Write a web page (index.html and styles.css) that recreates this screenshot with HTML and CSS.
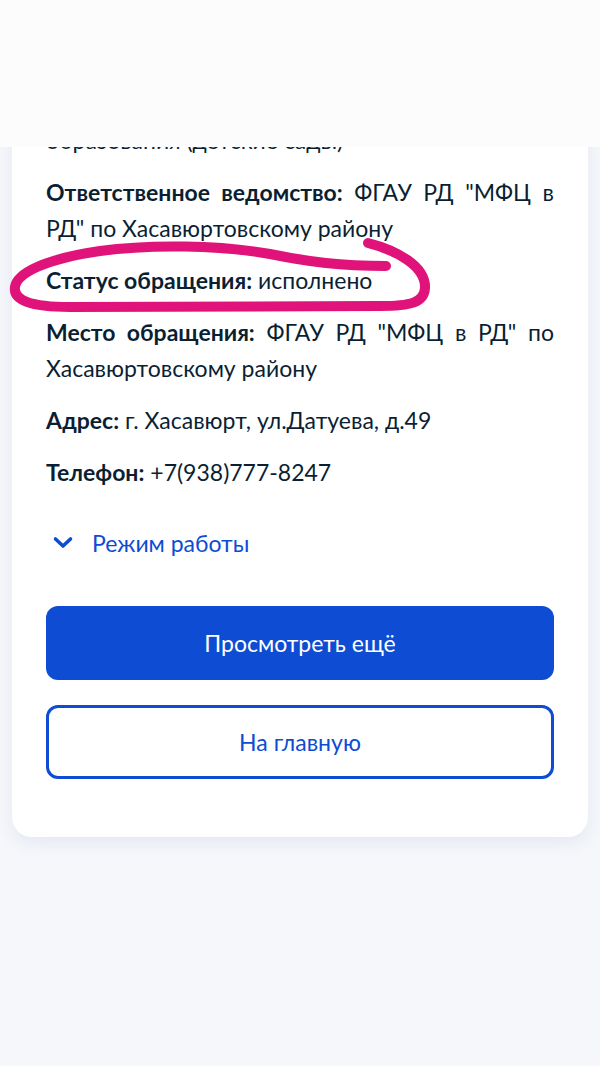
FILE: index.html
```html
<!DOCTYPE html>
<html lang="ru">
<head>
<meta charset="utf-8">
<title>Заявление</title>
<link rel="stylesheet" href="styles.css">
</head>
<body>
<div class="page">
  <div class="card">
    <p class="row">Услуга: Запись в организации дошкольного<br>образования (детские сады)</p>
    <p class="row"><b>Ответственное ведомство:</b> ФГАУ РД "МФЦ в РД" по Хасавюртовскому району</p>
    <p class="row"><b>Статус обращения:</b> исполнено</p>
    <p class="row"><b>Место обращения:</b> ФГАУ РД "МФЦ в РД" по Хасавюртовскому району</p>
    <p class="row"><b>Адрес:</b> г. Хасавюрт, ул.Датуева, д.49</p>
    <p class="row"><b>Телефон:</b> +7(938)777-8247</p>
    <div class="toggle">
      <svg class="chev" width="30" height="20" viewBox="0 0 30 20"><path d="M9.5 6 L17 13 L24.5 6" fill="none" stroke="#0d4cd3" stroke-width="3.6" stroke-linecap="round" stroke-linejoin="round"/></svg>
      <span>Режим работы</span>
    </div>
    <div class="btn primary">Просмотреть ещё</div>
    <div class="btn secondary">На главную</div>
  </div>
</div>
<div class="header"></div>
<svg class="mark" width="600" height="1066" viewBox="0 0 600 1066">
  <path d="M368 243 C 396 250, 426 266, 425 288 C 424 303, 410 306, 380 306 L 70 307 C 30 307, 13 300, 15 287 C 17 273, 45 259, 100 251 C 150 244, 220 245, 270 254 C 310 262, 340 266, 386 266" fill="none" stroke="#e0137a" stroke-width="10" stroke-linecap="round" stroke-linejoin="round"/>
</svg>
</body>
</html>
```
FILE: styles.css
```css
html, body {
  margin: 0;
  padding: 0;
}
body {
  background: #f5f7fb;
  font-family: Lato, "Noto Sans", sans-serif;
  color: #0b1f33;
  width: 600px;
  height: 1066px;
  overflow: hidden;
  position: relative;
}
.page {
  padding: 52px 12px 0;
}
.card {
  background: #ffffff;
  border-radius: 0 0 20px 20px;
  padding: 34px 34px 58px;
  box-shadow: 0 6px 18px rgba(40, 60, 120, 0.08);
}
.row {
  margin: 0 0 16px;
  font-size: 23px;
  line-height: 36px;
  text-align: justify;
}
.row b {
  font-weight: 700;
}
.toggle {
  display: flex;
  align-items: center;
  gap: 16px;
  margin-top: 35px;
  height: 36px;
  color: #0d4cd3;
  font-size: 23px;
  line-height: 36px;
}
.chev {
  display: block;
  margin-left: 0;
}
.btn {
  display: flex;
  align-items: center;
  justify-content: center;
  height: 74px;
  border-radius: 12px;
  font-size: 23px;
  box-sizing: border-box;
}
.primary {
  margin-top: 45px;
  background: #0d4cd3;
  color: #ffffff;
}
.secondary {
  margin-top: 25px;
  border: 3px solid #0d4cd3;
  color: #0d4cd3;
  background: #ffffff;
}
.header {
  position: absolute;
  top: 0;
  left: 0;
  width: 600px;
  height: 147px;
  background: #fcfcfc;
}
.mark {
  position: absolute;
  top: 0;
  left: 0;
  pointer-events: none;
}
```
